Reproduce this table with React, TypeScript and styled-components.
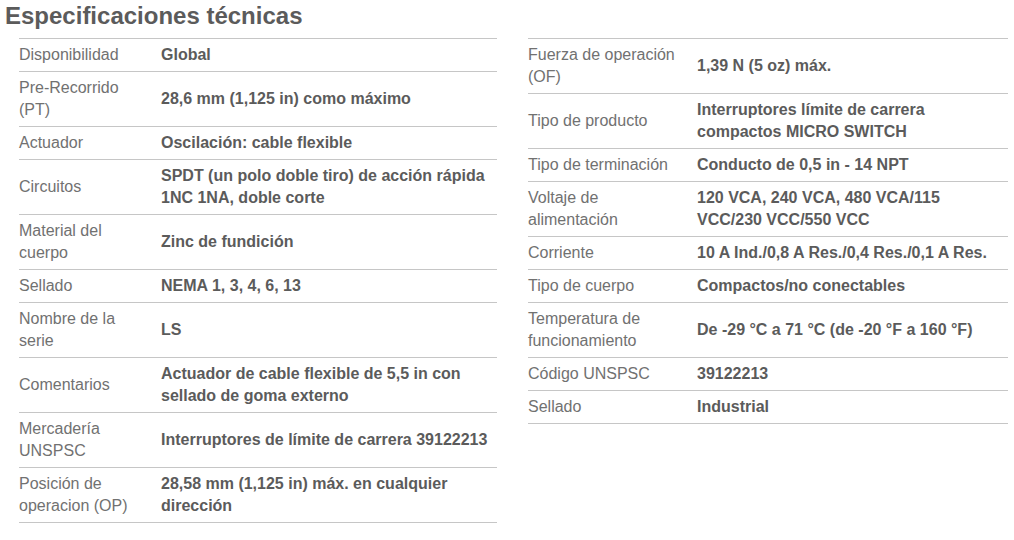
import React from "react";
import styled, { createGlobalStyle } from "styled-components";

const GlobalStyle = createGlobalStyle`
  html, body {
    margin: 0;
    padding: 0;
    background: #ffffff;
  }

  body {
    font-family: "Liberation Sans", Arial, sans-serif;
  }
`;

const Page = styled.div`
  width: 1014px;
  height: 540px;
  box-sizing: border-box;
  padding: 2px 6px 0 5px;
  overflow: hidden;
`;

const Title = styled.h2`
  margin: 0 0 8px 0;
  font-size: 24px;
  line-height: 28px;
  font-weight: bold;
  color: #5b5b5b;
`;

const Columns = styled.div`
  display: grid;
  grid-template-columns: 478px 480px;
  column-gap: 31px;
  padding-left: 14px;
  align-items: start;
`;

const SpecList = styled.div`
  display: flex;
  flex-direction: column;
  border-top: 1px solid #c6c6c6;
`;

const SpecRow = styled.div<{ $labelWidth: number }>`
  display: grid;
  grid-template-columns: ${({ $labelWidth }) => `${$labelWidth}px`} 1fr;
  align-items: center;
  padding: 5px 0;
  border-bottom: 1px solid #c6c6c6;
  font-size: 16px;
  line-height: 22px;
`;

const Label = styled.div`
  color: #717171;
  padding-right: 18px;
`;

const Value = styled.div`
  color: #5b5b5b;
  font-weight: bold;
`;

type Spec = [string, string];

const left: Spec[] = [
  ["Disponibilidad", "Global"],
  ["Pre-Recorrido (PT)", "28,6 mm (1,125 in) como máximo"],
  ["Actuador", "Oscilación: cable flexible"],
  ["Circuitos", "SPDT (un polo doble tiro) de acción rápida 1NC 1NA, doble corte"],
  ["Material del cuerpo", "Zinc de fundición"],
  ["Sellado", "NEMA 1, 3, 4, 6, 13"],
  ["Nombre de la serie", "LS"],
  ["Comentarios", "Actuador de cable flexible de 5,5 in con sellado de goma externo"],
  ["Mercadería UNSPSC", "Interruptores de límite de carrera 39122213"],
  ["Posición de operacion (OP)", "28,58 mm (1,125 in) máx. en cualquier dirección"],
];

const right: Spec[] = [
  ["Fuerza de operación (OF)", "1,39 N (5 oz) máx."],
  ["Tipo de producto", "Interruptores límite de carrera compactos MICRO SWITCH"],
  ["Tipo de terminación", "Conducto de 0,5 in - 14 NPT"],
  ["Voltaje de alimentación", "120 VCA, 240 VCA, 480 VCA/115 VCC/230 VCC/550 VCC"],
  ["Corriente", "10 A Ind./0,8 A Res./0,4 Res./0,1 A Res."],
  ["Tipo de cuerpo", "Compactos/no conectables"],
  ["Temperatura de funcionamiento", "De -29 °C a 71 °C (de -20 °F a 160 °F)"],
  ["Código UNSPSC", "39122213"],
  ["Sellado", "Industrial"],
];

const SpecTable = ({ items, labelWidth }: { items: Spec[]; labelWidth: number }) => (
  <SpecList>
    {items.map(([label, value]) => (
      <SpecRow key={label} $labelWidth={labelWidth}>
        <Label>{label}</Label>
        <Value>{value}</Value>
      </SpecRow>
    ))}
  </SpecList>
);

export default function App() {
  return (
    <>
      <GlobalStyle />
      <Page>
        <Title>Especificaciones técnicas</Title>
        <Columns>
          <SpecTable items={left} labelWidth={142} />
          <SpecTable items={right} labelWidth={169} />
        </Columns>
      </Page>
    </>
  );
}
